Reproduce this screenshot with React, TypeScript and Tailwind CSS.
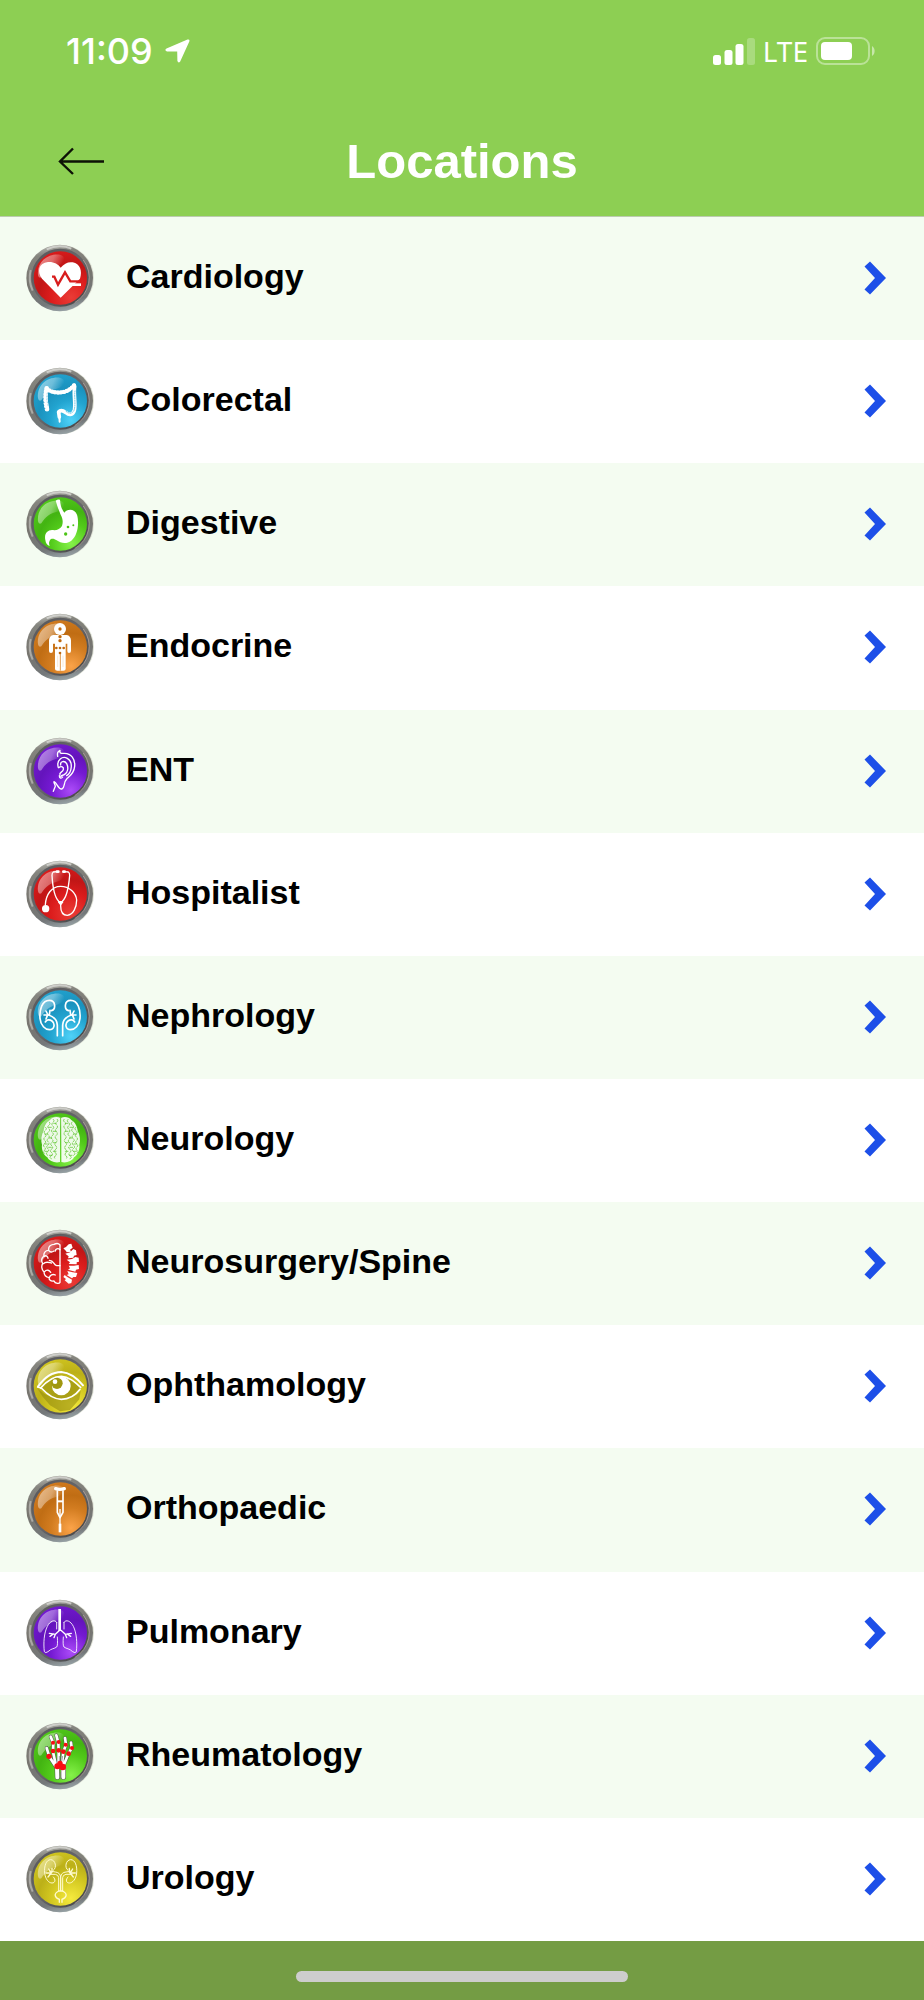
import { ReactNode } from "react";

type Tone = { base: string; dark: string; light: string };

const red: Tone = { base: "#dc1c1c", dark: "#c11616", light: "#ea3c36" };
const blue: Tone = { base: "#22a4d0", dark: "#1b92be", light: "#4fd2f8" };
const green: Tone = { base: "#52ca1a", dark: "#43b412", light: "#86f24a" };
const orange: Tone = { base: "#d27c20", dark: "#c06d14", light: "#fba349" };
const purple: Tone = { base: "#7419d2", dark: "#6414bc", light: "#ab4bf8" };
const yellow: Tone = { base: "#d2c720", dark: "#bcb018", light: "#f5ea3e" };

/* ── Badge glyphs, drawn around 0,0 ── */
const Heart = () => (
  <g fill="none">
    <path d="M2 59 L-54 2 C-70 -18 -64 -46 -36 -48 C-18 -49 -6 -42 2 -31 C12 -43 24 -49 38 -47 C60 -44 68 -20 60 2 Z" fill="#fff" />
    <path d="M-24 -4 L-17 -4 L-6 20 L15 -17 L31 10 L66 10" stroke="#d81c1c" strokeWidth={7} />
    <path d="M28 20 H63" stroke="#fff" strokeWidth={8} />
  </g>
);

const Colon = () => (
  <g fill="none" stroke="#fff" strokeLinecap="round" strokeLinejoin="round">
    <path d="M-40 -40 C-44 -20 -41 4 -37 22" strokeWidth={9} />
    <path d="M-40 -38 C-46 -14 -44 8 -38 28" strokeWidth={14} strokeDasharray="0 9" />
    <path d="M-40 -36 C-20 -22 20 -18 43 -48" strokeWidth={10} />
    <path d="M-40 -36 C-20 -22 20 -18 43 -48" strokeWidth={13} strokeDasharray="0 9" />
    <path d="M44 -44 C40 -18 48 10 43 28 C38 44 26 42 18 35 C8 28 0 28 -4 33" strokeWidth={11} />
    <path d="M-4 34 L-2 48" strokeWidth={11} />
    <path d="M-2 46 L-1 62" strokeWidth={6} />
    <path d="M45 -30 C42 -14 48 10 42 28 C36 40 26 38 18 31" stroke="#6cc8e6" strokeWidth={3} strokeDasharray="3 4" />
    <path d="M-38 -24 C-42 -8 -38 4 -34 20" stroke="#8fd2ea" strokeWidth={3} strokeDasharray="3 6" />
  </g>
);

const Stomach = () => (
  <g>
    <path d="M-13 -70 Q-7 -75 0 -73 C1 -56 6 -42 13 -34 C20 -46 44 -48 51 -28 C58 -4 54 34 34 50 C20 61 2 58 -10 49 C-18 43 -28 42 -31 50 C-34 56 -33 60 -31 66 C-38 64 -43 58 -44 48 C-48 30 -38 18 -24 18 C-10 20 0 16 6 6 C10 -6 8 -18 2 -28 C-4 -42 -8 -54 -13 -70 Z" fill="#fff" />
    <g fill="#4cc416">
      <circle cx="24" cy="9" r="4" />
      <circle cx="40" cy="4" r="3" />
      <circle cx="17" cy="30" r="5" />
    </g>
  </g>
);

const Body = () => (
  <g fill="#fff">
    <circle cx="0" cy="-54" r="18" />
    <path d="M-20 -36 H20 Q32 -34 33 -20 V12 Q33 18 27 18 Q22 18 22 12 V-10 H17 V66 Q17 71 10 71 H-8 Q-15 71 -15 66 V-10 H-21 V12 Q-21 18 -27 18 Q-33 18 -33 12 V-20 Q-32 -34 -20 -36 Z" />
    <path d="M1 18 V71" stroke="#e09a50" strokeWidth={3} />
    <path d="M-7 26 V60 M9 26 V60" stroke="#f6dcc0" strokeWidth={2} />
    <g fill="#c06a10">
      <circle cx="0" cy="-54" r="5" />
      <circle cx="0" cy="-31" r="5" />
      <circle cx="0" cy="-19" r="5" />
      <circle cx="-11" cy="3" r="4" />
      <circle cx="0" cy="3" r="4" />
      <circle cx="11" cy="3" r="4" />
      <circle cx="0" cy="18" r="4" />
    </g>
  </g>
);

const Ear = () => (
  <g fill="none" stroke="#fff" strokeWidth={4} strokeLinecap="round" strokeLinejoin="round">
    <path d="M-7 -44 C-9 -56 -6 -58 0 -62 C-2 -52 4 -52 12 -53 C34 -54 46 -34 44 -14 C42 8 28 16 20 24 C10 34 16 48 6 54 C-6 56 -8 36 -18 32 C-20 34 -14 42 -14 46 L-20 61" />
    <path d="M-5 -10 C-12 -34 8 -46 22 -38 C40 -28 36 4 20 14" />
    <path d="M2 -18 C0 -30 14 -32 20 -22 C26 -10 24 4 14 10 C8 14 4 12 2 18" />
    <path d="M-4 -10 C4 -16 12 -12 10 -4 C8 4 -4 4 0 12" />
    <path d="M-2 14 C-2 22 4 24 8 18" />
  </g>
);

const Stethoscope = () => (
  <g fill="none" stroke="#fff" strokeWidth={4} strokeLinecap="round" strokeLinejoin="round">
    <path d="M-9 -67 L-20 -66 Q-24 -64 -24 -56 C-22 -20 -16 10 -4 22 Q2 26 7 22 C20 10 26 -20 29 -56 Q29 -64 25 -66 L14 -67" />
    <path d="M-9 -67 H-5 M10 -67 H14" strokeWidth={8} />
    <path d="M2 24 V36 C2 56 10 64 22 64 C40 62 50 40 50 18 C48 -4 28 -23 2 -23 C-26 -23 -42 2 -44 32" />
    <path d="M-4 24 L2 32 L8 24 Z" fill="#fff" />
    <circle cx="-43" cy="44" r="9" fill="#fff" />
  </g>
);

const HalfKidney = () => (
  <g fill="none" stroke="#fff" strokeWidth={5} strokeLinecap="round" strokeLinejoin="round">
    <path d="M-26 -19 C-12 -22 -12 -50 -32 -50 C-54 -50 -62 -22 -60 4 C-58 26 -44 38 -32 38 C-16 38 -14 20 -24 12 C-32 6 -40 8 -44 15" />
    <path d="M-8 56 V24 C-9 8 -22 -2 -34 -6" />
    <path d="M-34 -6 L-48 -6 M-36 -6 L-42 -18 M-32 -6 L-30 -20 M-38 -4 L-42 6" />
  </g>
);

const Kidneys = () => (
  <g>
    <HalfKidney />
    <g transform="scale(-1 1)">
      <HalfKidney />
    </g>
  </g>
);

const HalfBrain = () => (
  <g>
    <path d="M1 -66 C-10 -72 -24 -68 -30 -60 C-42 -54 -48 -38 -49 -28 C-56 -16 -58 2 -54 14 C-56 28 -50 44 -38 52 C-32 64 -14 70 0 66 Z" fill="#fff" opacity={0.9} />
    <g fill="none" stroke="#52c01e" strokeWidth={2} strokeLinecap="round" strokeDasharray="9 4">
      <path d="M-8 -62 q5 6 -3 9 q-6 5 2 9 q5 6 -2 10 q-6 5 1 10 q5 6 -2 11 q-6 5 1 10 q5 6 -2 11 q-6 5 1 10 q5 6 -2 11 q-5 5 1 10 q5 6 -2 9 q-5 5 1 8" />
      <path d="M-20 -62 q6 5 -2 10 q-7 5 1 10 q6 5 -2 10 q-7 5 1 10 q6 5 -2 10 q-7 5 1 10 q6 5 -2 10 q-7 5 1 10 q6 5 -2 10 q-7 5 1 10 q6 5 -2 10 q-7 5 1 8" />
      <path d="M-32 -54 q6 5 -2 10 q-7 5 1 10 q6 5 -2 10 q-7 5 1 10 q6 5 -2 10 q-7 5 1 10 q6 5 -2 10 q-7 5 1 10 q6 5 -2 10 q-7 5 1 10" />
      <path d="M-43 -38 q6 5 -2 10 q-7 5 1 10 q6 5 -2 10 q-7 5 1 10 q6 5 -2 10 q-7 5 1 10 q6 5 -2 10 q-4 5 1 8" />
      <path d="M-12 -50 h-7 M-26 -38 h-8 M-12 -26 h-8 M-38 -18 h-8 M-25 -6 h-8 M-12 8 h-8 M-38 12 h-8 M-26 22 h-8 M-12 34 h-8 M-38 34 h-7 M-24 46 h-8" />
    </g>
  </g>
);

const Brain = () => (
  <g>
    <HalfBrain />
    <g transform="translate(4 0) scale(-1 1)">
      <HalfBrain />
    </g>
    <path d="M2 -66 V66" stroke="#5fd02a" strokeWidth={2} />
  </g>
);

const BrainSpine = () => (
  <g>
    <g fill="none" stroke="#fff" strokeWidth={4} strokeLinecap="round" strokeLinejoin="round">
      <path d="M0 -54 V58 Q-2 62 -8 61 Q-16 60 -18 54 C-30 56 -34 48 -32 44 C-44 42 -48 36 -48 26 C-56 20 -56 8 -52 2 C-58 -8 -54 -18 -48 -20 C-50 -30 -44 -38 -34 -38 C-36 -50 -26 -56 -18 -56 Q-6 -62 0 -54" />
      <path d="M-34 -38 C-30 -32 -24 -32 -18 -36 M0 -40 C-6 -46 -14 -42 -14 -36 M-48 -20 C-42 -24 -36 -20 -36 -14 M-50 2 C-42 -6 -34 -2 -26 0 M0 8 H-10 C-20 6 -18 -8 -32 -8 M-46 26 C-40 18 -32 22 -28 28 M-32 44 C-30 36 -22 32 -14 36" />
    </g>
    <g fill="#fff">
      <path d="M10 -44 L18 -48 L26 -56 L34 -58 L38 -46 L30 -40 L34 -34 L20 -32 L18 -36 Z" />
      <path d="M16 -28 L30 -32 L40 -42 L48 -38 L50 -24 L42 -22 L40 -16 L24 -14 L26 -20 Z" />
      <path d="M20 -10 L36 -12 L46 -18 L56 -16 L57 -4 L50 -2 L50 4 L26 3 L30 -2 Z" />
      <path d="M26 8 L42 8 L56 6 L57 18 L48 20 L46 26 L24 20 L30 16 Z" />
      <path d="M22 24 L38 28 L52 30 L48 42 L40 42 L36 46 L20 36 L26 34 Z" />
      <path d="M14 36 L22 42 L36 50 L34 60 L26 62 L14 52 L18 48 L10 42 Z" />
    </g>
  </g>
);

const Eye = () => (
  <g>
    <path d="M-70 4 C-40 40 30 54 62 14 L58 40 L30 72 L0 76 L-30 58 L-52 32 Z" fill="#958c10" opacity={0.6} />
    <path d="M-58 6 C-34 -22 -14 -29 4 -29 C28 -28 46 -10 62 4 C44 30 24 40 4 40 C-12 40 -34 30 -58 6 Z" fill="#aaa015" />
    <g fill="none" stroke="#fff" strokeWidth={6} strokeLinecap="round" strokeLinejoin="round">
      <path d="M-66 2 C-40 -36 -12 -42 4 -42 C34 -40 54 -20 69 -2" />
      <path d="M-58 6 C-34 -22 -14 -29 4 -29 C28 -28 46 -10 62 4" strokeWidth={5} />
      <path d="M-67 3 L-56 6 C-34 30 -12 40 4 40 C28 40 48 26 60 10" strokeWidth={5} />
    </g>
    <circle cx="4" cy="0" r="28" fill="#fff" />
    <circle cx="-9" cy="-8" r="17" fill="#a0970f" />
    <circle cx="-15" cy="-13" r="7" fill="#fff" />
  </g>
);

const Crutch = () => (
  <g fill="none" stroke="#fff" strokeWidth={5} strokeLinejoin="round">
    <path d="M-13 -61 Q0 -57 13 -61" strokeWidth={10} strokeLinecap="round" />
    <path d="M-8 -56 V10 L0 26 L9 10 V-56" />
    <path d="M-8 -23 H9" strokeWidth={6} />
    <path d="M0 0 V68" strokeWidth={4} />
    <path d="M0 44 V70" strokeWidth={8} />
  </g>
);

const HalfLung = () => (
  <g fill="none" stroke="#fff" strokeLinecap="round" strokeLinejoin="round">
    <path d="M-10 -32 C-16 -42 -30 -36 -38 -20 C-48 0 -50 30 -47 56 Q-44 62 -36 56 C-26 46 -18 48 -10 42 Q-6 38 -8 12 M-10 -32 V-12" strokeWidth={3} opacity={0.85} />
    <path d="M-1 -8 L-14 4 L-32 1 M-14 4 L-18 14 M-20 3 L-30 10" strokeWidth={4} />
  </g>
);

const Lungs = () => (
  <g>
    <HalfLung />
    <g transform="translate(2 0) scale(-1 1)">
      <HalfLung />
    </g>
    <path d="M-1 -72 V-6" stroke="#fff" strokeWidth={8} />
  </g>
);

const fingers =
  "M-12 28 L-21 -12 L-20 -38 L-28 -58 M-4 26 L-4 -14 L-5 -40 L-11 -62 M6 26 L10 -12 L18 -34 L15 -54 M10 30 L26 -8 L35 -24 L33 -40 M-14 30 L-32 2 L-40 -24";

const Hand = () => (
  <g>
    <g fill="none" stroke="#555" strokeWidth={11} strokeLinecap="round" strokeLinejoin="round">
      <path d={fingers} />
      <path d="M-9 36 L-8 64 M10 36 L10 64" strokeWidth={15} />
    </g>
    <g fill="none" stroke="#fff" strokeWidth={8} strokeLinecap="round" strokeLinejoin="round">
      <path d={fingers} />
      <path d="M-9 36 L-8 64 M10 36 L10 64" strokeWidth={12} />
    </g>
    <path d="M-12 34 L-10 20 M-2 20 L-2 0 M4 22 L8 0 M1 48 V70" stroke="#777" strokeWidth={2} />
    <g fill="#f80d12">
      <circle cx="-21" cy="-40" r="6" />
      <circle cx="-4" cy="-42" r="6" />
      <circle cx="17" cy="-34" r="6" />
      <circle cx="36" cy="-24" r="6" />
      <circle cx="-21" cy="-15" r="7" />
      <circle cx="-4" cy="-17" r="7" />
      <circle cx="10" cy="-13" r="7" />
      <circle cx="26" cy="-7" r="7" />
      <circle cx="-33" cy="1" r="8" />
      <circle cx="-8" cy="31" r="9" />
      <circle cx="0" cy="22" r="8" />
      <circle cx="8" cy="33" r="10" />
    </g>
  </g>
);

const HalfUrinary = () => (
  <g fill="none" stroke="#fffbd0" strokeWidth={3} strokeLinecap="round" strokeLinejoin="round">
    <path d="M-20 -26 C-8 -34 -14 -58 -28 -58 C-42 -58 -48 -38 -46 -18 C-44 0 -34 12 -24 12 C-14 12 -12 2 -20 -6" />
    <path d="M-4 36 V-4 Q-4 -12 -14 -14 L-32 -14 M2 34 V-6 Q0 -20 -14 -21 L-32 -24" />
    <path d="M-26 -18 L-34 -30 M-26 -18 H-42 M-26 -18 L-36 -6 M-24 -20 V-32" strokeWidth={4} />
  </g>
);

const Urinary = () => (
  <g>
    <HalfUrinary />
    <g transform="translate(4 0) scale(-1 1)">
      <HalfUrinary />
    </g>
    <path d="M-4 36 H8 C24 44 20 56 6 61 V70 M-4 36 C-20 44 -16 56 -2 61 V70" fill="none" stroke="#fffbd0" strokeWidth={4} strokeLinecap="round" />
  </g>
);

const locations = [
  { name: "Cardiology", Glyph: Heart, tone: red },
  { name: "Colorectal", Glyph: Colon, tone: blue },
  { name: "Digestive", Glyph: Stomach, tone: green },
  { name: "Endocrine", Glyph: Body, tone: orange },
  { name: "ENT", Glyph: Ear, tone: purple },
  { name: "Hospitalist", Glyph: Stethoscope, tone: red },
  { name: "Nephrology", Glyph: Kidneys, tone: blue },
  { name: "Neurology", Glyph: Brain, tone: green },
  { name: "Neurosurgery/Spine", Glyph: BrainSpine, tone: red },
  { name: "Ophthamology", Glyph: Eye, tone: yellow },
  { name: "Orthopaedic", Glyph: Crutch, tone: orange },
  { name: "Pulmonary", Glyph: Lungs, tone: purple },
  { name: "Rheumatology", Glyph: Hand, tone: green },
  { name: "Urology", Glyph: Urinary, tone: yellow },
];

/* Glossy button with a metal rim */
function Badge({ id, tone, children }: { id: string; tone: Tone; children: ReactNode }) {
  return (
    <svg viewBox="-102 -102 204 204" className="w-[68px] h-[68px] shrink-0" aria-hidden="true">
      <defs>
        <linearGradient id={`rim-${id}`} x1="0.4" y1="0" x2="0.6" y2="1">
          <stop offset="0" stopColor="#b4b4ae" />
          <stop offset="0.12" stopColor="#85857f" />
          <stop offset="0.5" stopColor="#77756f" />
          <stop offset="0.85" stopColor="#74787a" />
          <stop offset="1" stopColor="#9aa5a9" />
        </linearGradient>
        <linearGradient id={`inner-${id}`} x1="0" y1="0" x2="1" y2="1">
          <stop offset="0" stopColor="#57575a" />
          <stop offset="0.5" stopColor="#66666a" />
          <stop offset="1" stopColor="#3f3f3f" />
        </linearGradient>
        <radialGradient id={`glass-${id}`} cx="0.7" cy="0.86" r="0.95">
          <stop offset="0" stopColor={tone.light} />
          <stop offset="0.4" stopColor={tone.base} />
          <stop offset="0.65" stopColor={tone.dark} />
          <stop offset="1" stopColor={tone.base} />
        </radialGradient>
        <linearGradient id={`gloss-${id}`} x1="0.1" y1="0.3" x2="0.85" y2="0.6">
          <stop offset="0" stopColor="#fff" stopOpacity="0.45" />
          <stop offset="0.5" stopColor="#fff" stopOpacity="0.35" />
          <stop offset="1" stopColor="#fff" stopOpacity="0" />
        </linearGradient>
      </defs>
      <circle cx="2" cy="0" r="100" fill="#dfe2d6" />
      <circle cx="-1" cy="0" r="100" fill={`url(#rim-${id})`} />
      <path d="M-88 -24 A92 92 0 0 0 -82 38" fill="none" stroke="#c2c0bc" strokeWidth={6} opacity={0.7} />
      <path d="M-40 -86 A94 94 0 0 1 34 -88" fill="none" stroke="#d8d8d4" strokeWidth={6} opacity={0.8} />
      <circle cx="1" cy="-1" r="87" fill={`url(#inner-${id})`} />
      <path d="M70 -54 A87 87 0 0 1 44 74" fill="none" stroke="#b9a9a4" strokeWidth={3} opacity={0.8} />
      <circle cx="1" cy="0" r="80" fill={`url(#glass-${id})`} />
      <path d="M-66 -8 C-70 -48 -38 -74 0 -70 C22 -64 14 -42 -12 -36 C-40 -28 -48 -14 -56 -2 Q-64 2 -66 -8 Z" fill={`url(#gloss-${id})`} />
      {children}
    </svg>
  );
}

export default function App() {
  return (
    <main className="min-h-screen flex flex-col bg-white font-['Liberation_Sans',Arial,sans-serif]">
      <header className="bg-[#8dcf53] border-b border-[#bccbb0]">
        {/* Status bar */}
        <div className="h-[102px] pl-[66px] pr-12 flex items-center justify-between text-white font-['Inter',sans-serif]">
          <div className="flex items-center gap-3">
            <span className="text-[36px] font-medium">11:09</span>
            <svg viewBox="0 0 25 24" className="w-[25px] h-6" fill="#fff" aria-hidden="true">
              <path d="M1.5 9.5 L22.5 0.6 Q25 0 24.3 2.4 L15.2 22.6 Q13.4 24.6 12.4 22 L12.2 12.6 L2 12.4 Q-1 11.4 1.5 9.5 Z" />
            </svg>
          </div>
          <div className="flex items-center gap-2">
            <svg viewBox="0 0 42 27" className="w-[42px] h-[27px]" fill="#fff" aria-hidden="true">
              <rect x="0" y="17" width="8" height="10" rx="2.5" />
              <rect x="11.5" y="12" width="8" height="15" rx="2.5" />
              <rect x="22.5" y="6" width="8" height="21" rx="2.5" />
              <rect x="34" y="0" width="8" height="27" rx="2.5" opacity="0.25" />
            </svg>
            <span className="text-[28px] font-['Noto_Sans',sans-serif]">LTE</span>
            <svg viewBox="0 0 60 28" className="w-[60px] h-7" fill="none" aria-hidden="true">
              <rect x="1" y="1" width="52" height="26" rx="8" stroke="#fff" strokeWidth={2} opacity="0.4" />
              <rect x="5" y="5" width="31" height="18" rx="4" fill="#fff" />
              <path d="M56 9 C59.5 11 59.5 17 56 19 Z" fill="#fff" opacity="0.5" />
            </svg>
          </div>
        </div>

        {/* Title bar */}
        <div className="h-[114px] pt-1 px-14 grid grid-cols-[48px_1fr_48px] items-center">
          <button type="button" aria-label="Back" className="h-12 flex items-center">
            <svg viewBox="0 0 48 28" className="w-12 h-7" fill="none" stroke="#0d1206" strokeWidth={2.4} aria-hidden="true">
              <path d="M48 14.5 H4 M17 1.5 L4 14.5 L17 27" />
            </svg>
          </button>
          <h1 className="text-center text-[49px] leading-none font-bold text-white">Locations</h1>
        </div>
      </header>

      <ul className="flex-1 grid auto-rows-fr">
        {locations.map(({ name, Glyph, tone }) => (
          <li key={name} className="odd:bg-[#f4fcf1]">
            <a href={`#${name}`} className="h-full min-h-[100px] pb-px pl-[26px] pr-[38px] flex items-center">
              <Badge id={name.replace("/", "-")} tone={tone}>
                <Glyph />
              </Badge>
              <span className="flex-1 pl-8 pb-1 text-[34px] leading-10 font-bold text-black">{name}</span>
              <svg viewBox="0 0 22 34" className="w-[22px] h-[34px]" fill="#1d4fe8" aria-hidden="true">
                <path d="M6 0.5 L22 17 L6 33.5 L0.5 28.5 L11 17 L0.5 5.5 Z" />
              </svg>
            </a>
          </li>
        ))}
      </ul>

      {/* Home indicator */}
      <footer className="h-[59px] pt-[30px] bg-[#749c44] flex justify-center">
        <div className="w-[36%] h-[11px] rounded-full bg-[#cdcdcd]" />
      </footer>
    </main>
  );
}
